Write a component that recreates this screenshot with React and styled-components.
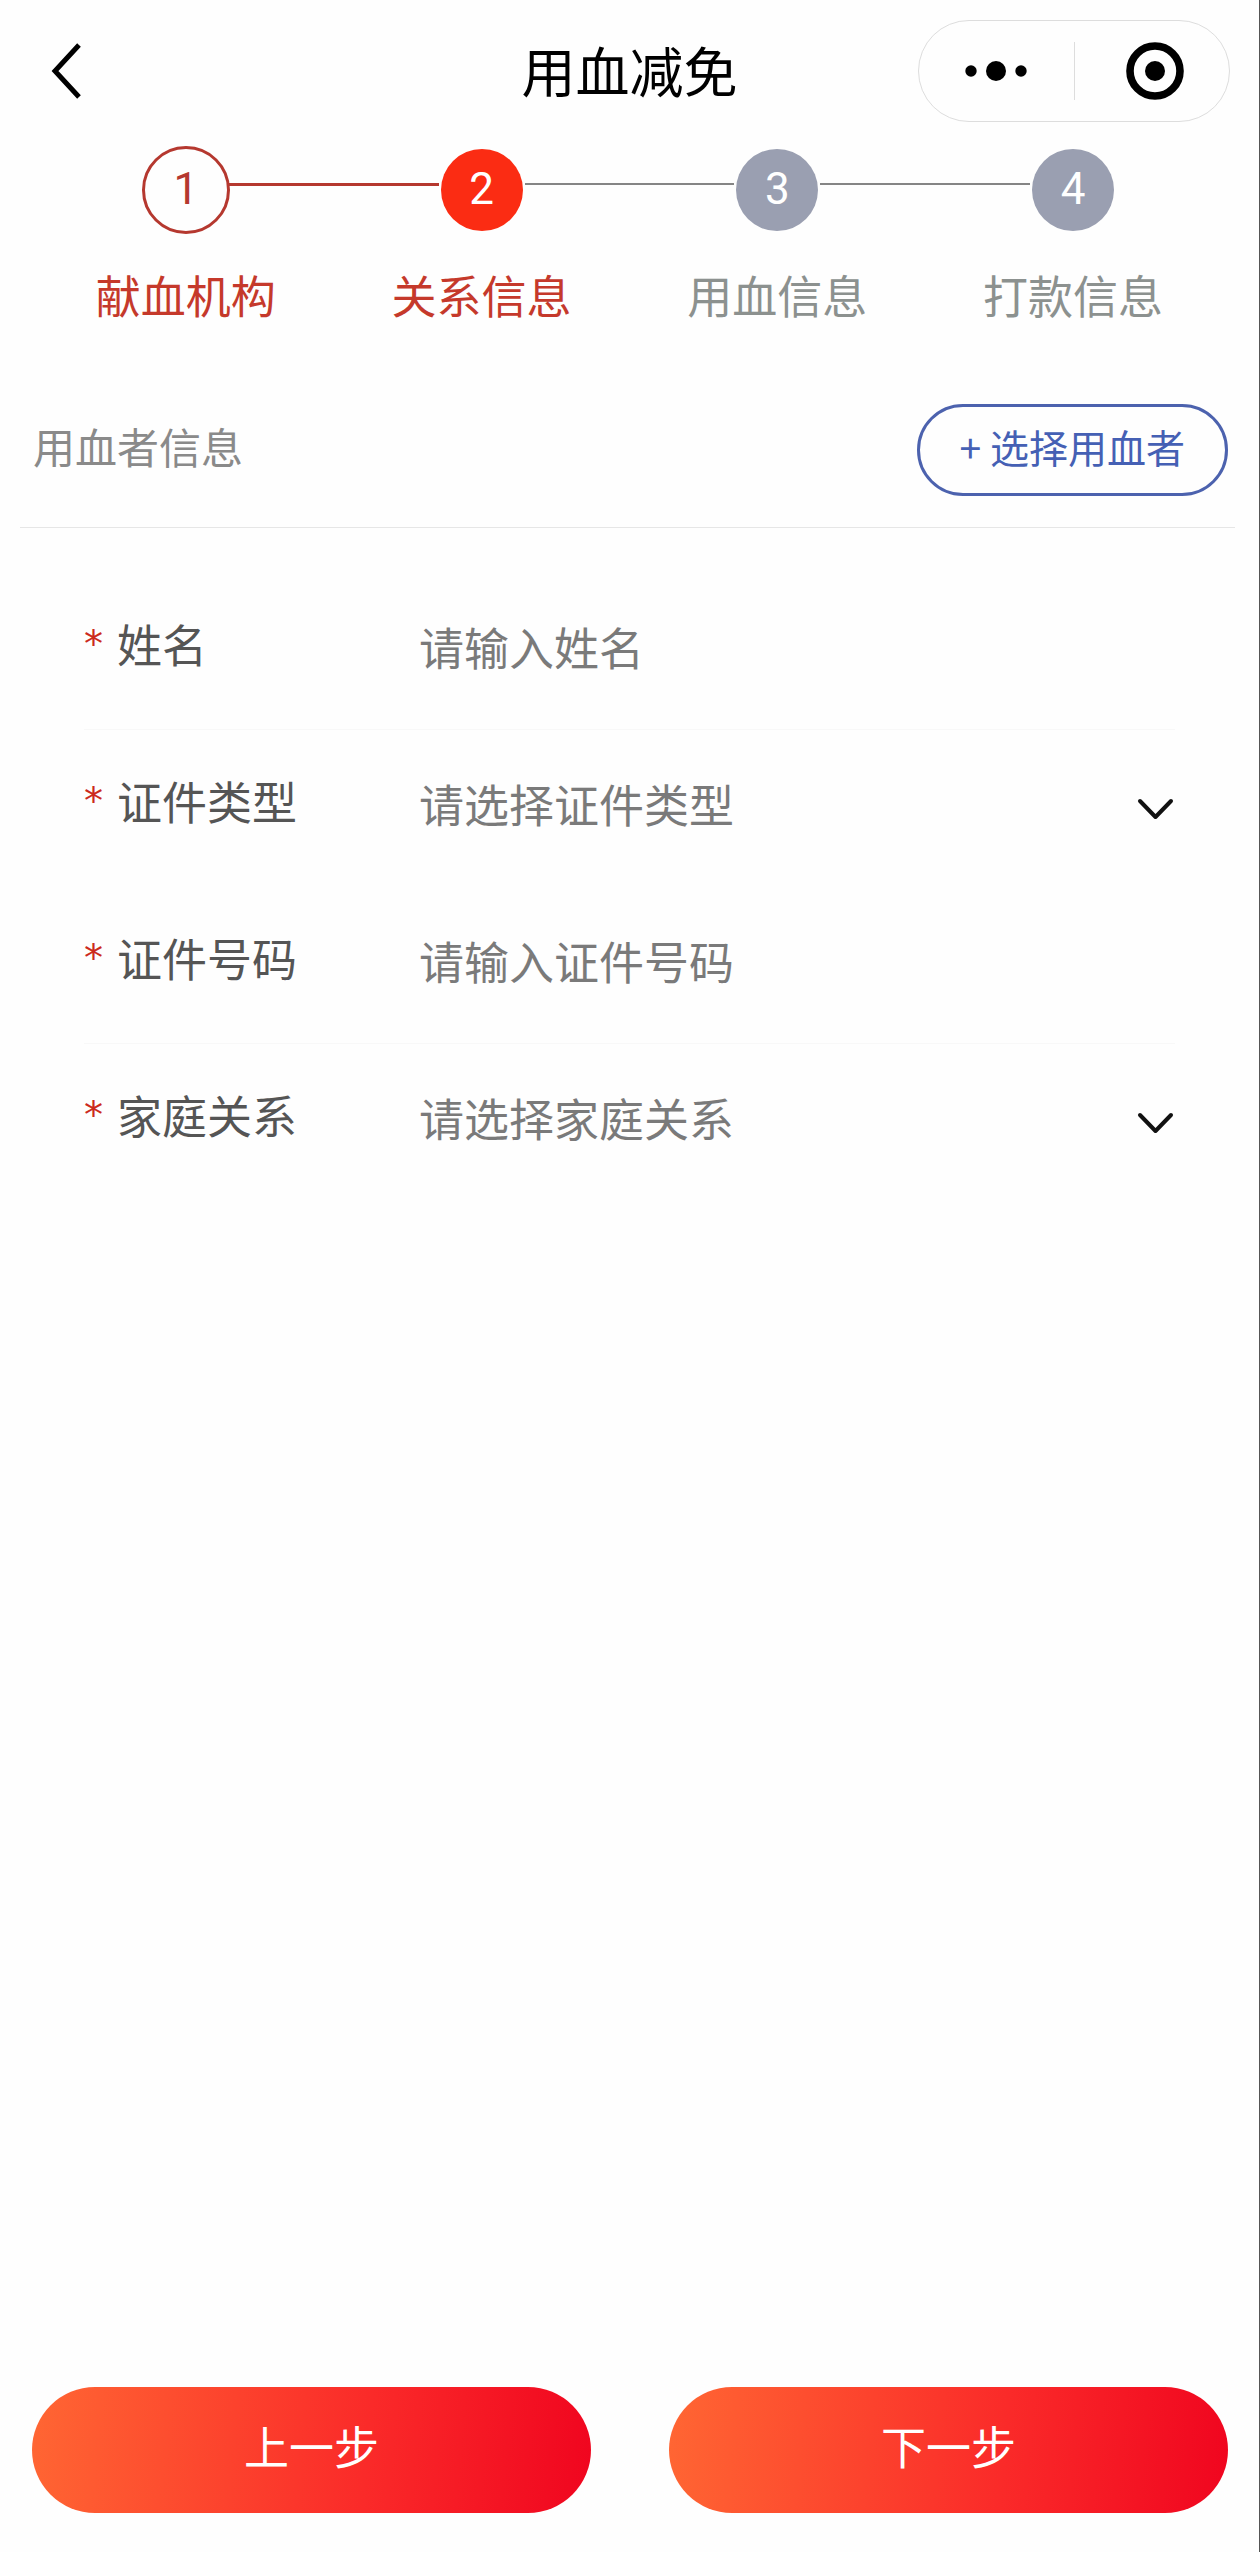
import React, { useState } from 'react'
import styled, { createGlobalStyle } from 'styled-components'

const GlobalStyle = createGlobalStyle`
  * {
    box-sizing: border-box;
  }

  body {
    margin: 0;
    background: #fefefe;
  }

  body, button, input, select {
    font-family: "Noto Sans CJK SC", sans-serif;
  }
`

const Page = styled.div`
  display: flex;
  flex-direction: column;
  min-height: 100vh;
  border-right: 1px solid #555;
`

const NavBar = styled.header`
  display: grid;
  grid-template-columns: 1fr auto 1fr;
  align-items: center;
  padding: 20px 29px 0;
`

const BackButton = styled.button`
  display: flex;
  justify-self: start;
  padding: 0 20px;
  border: 0;
  background: none;
`

const Title = styled.h1`
  margin: 0;
  padding-bottom: 2px;
  color: #000;
  font-size: 54px;
  font-weight: 400;
  line-height: 80px;
`

const Capsule = styled.div`
  display: grid;
  grid-template-columns: 1fr 1fr;
  justify-self: end;
  align-items: center;
  width: 312px;
  height: 102px;
  border: 1px solid #ddd;
  border-radius: 51px;
`

const CapsuleButton = styled.button`
  display: flex;
  justify-content: center;
  padding: 0;
  border: 0;
  background: none;

  & + & {
    padding-left: 6px;
    border-left: 1px solid #ddd;
  }
`

const Steps = styled.ol`
  display: grid;
  grid-template-columns: repeat(4, 1fr);
  margin: 0;
  padding: 24px 38px 0;
  list-style: none;
`

const Step = styled.li`
  display: flex;
  flex-direction: column;
  gap: 28px;
  color: ${props => props.$reached ? '#c5392b' : '#8c918f'};
  font-size: 45px;
  line-height: 66px;
  text-align: center;
`

const StepTrack = styled.div`
  display: flex;
  align-items: center;
  gap: 2px;
  height: 88px;
`

const StepLine = styled.span`
  flex: 1;
  height: ${props => props.$done ? 3 : 2}px;
  margin-bottom: 12px;
  background: ${props => props.$hidden ? 'transparent' : props.$done ? '#b5382f' : '#858585'};
`

const circleColors = {
  done: 'transparent',
  active: '#fb2c13',
  todo: '#9a9fb1'
}

const StepCircle = styled.span`
  width: ${props => props.$state === 'done' ? 88 : 82}px;
  height: ${props => props.$state === 'done' ? 88 : 82}px;
  margin: ${props => props.$state === 'done' ? '0 -3px' : 0};
  border: ${props => props.$state === 'done' ? '3px solid #b5382f' : 0};
  border-radius: 50%;
  background: ${props => circleColors[props.$state]};
  color: ${props => props.$state === 'done' ? '#b5382f' : '#fff'};
  font-family: Roboto, sans-serif;
  font-size: 44px;
  line-height: 80px;
`

const SectionHeader = styled.div`
  display: flex;
  align-items: center;
  justify-content: space-between;
  margin: 76px 24px 0 20px;
  padding: 0 7px 31px 13px;
  border-bottom: 1px solid #e6e6e6;
`

const SectionTitle = styled.h2`
  margin: 0;
  padding-bottom: 8px;
  color: #8a8a8a;
  font-size: 42px;
  font-weight: 400;
  line-height: 60px;
`

const PickButton = styled.button`
  height: 92px;
  padding: 0 40px 8px;
  border: 3px solid #4c62ae;
  border-radius: 46px;
  background: none;
  color: #4560b4;
  font-size: 39px;
`

const Form = styled.form`
  display: flex;
  flex: 1;
  flex-direction: column;
  padding-top: 45px;
`

const Field = styled.div`
  display: grid;
  grid-template-columns: 335px 1fr;
  align-items: center;
  height: 157px;
  margin: 0 84px;
  border-bottom: 1px solid ${props => props.$line ? '#f8f8f8' : 'transparent'};
  font-size: 45px;
`

const Label = styled.label`
  display: flex;
  gap: 14px;
  padding-bottom: 14px;
  color: #555;
  line-height: 68px;
`

const Star = styled.span`
  color: #cc2a1c;
  font-family: "DejaVu Sans", sans-serif;
  font-size: 38px;
  line-height: 68px;
`

const Input = styled.input`
  width: 100%;
  height: 80px;
  padding: 0 0 10px;
  border: 0;
  outline: 0;
  background: none;
  color: #505050;
  font-size: 45px;

  &::placeholder {
    color: #7a7a7a;
    opacity: 1;
  }
`

const SelectBox = styled.div`
  display: grid;
  align-items: center;

  & > * {
    grid-area: 1 / 1;
  }

  & > svg {
    justify-self: end;
    pointer-events: none;
  }
`

const Select = styled.select`
  width: 100%;
  height: 80px;
  padding: 0 60px 10px 0;
  border: 0;
  outline: 0;
  appearance: none;
  background: none;
  color: ${props => props.value ? '#505050' : '#7a7a7a'};
  font-size: 45px;
`

const Footer = styled.footer`
  display: grid;
  grid-template-columns: 1fr 1fr;
  gap: 78px;
  padding: 0 31px 39px 32px;
`

const FooterButton = styled.button`
  height: 126px;
  padding: 0 0 10px;
  border: 0;
  border-radius: 63px;
  background: linear-gradient(95deg, #ff6633, #fa2a29 60%, #f0051f);
  color: #fff;
  font-size: 45px;
`

const steps = [
  { title: '献血机构', state: 'done' },
  { title: '关系信息', state: 'active' },
  { title: '用血信息', state: 'todo' },
  { title: '打款信息', state: 'todo' }
]

const fields = [
  { id: 'name', label: '姓名', placeholder: '请输入姓名', line: true },
  { id: 'idType', label: '证件类型', placeholder: '请选择证件类型', options: ['居民身份证', '护照', '军官证'] },
  { id: 'idNumber', label: '证件号码', placeholder: '请输入证件号码', line: true },
  { id: 'relation', label: '家庭关系', placeholder: '请选择家庭关系', options: ['本人', '配偶', '父母', '子女'] }
]

function BackIcon () {
  return (
    <svg width='36' height='58' viewBox='0 0 36 58' fill='none' stroke='#000' strokeWidth='5'>
      <path d='M30 3 L6 29 L30 55' />
    </svg>
  )
}

function MoreIcon () {
  return (
    <svg width='64' height='22' viewBox='0 0 64 22'>
      <circle cx='6' cy='11' r='5.7' />
      <circle cx='31' cy='11' r='10' />
      <circle cx='56' cy='11' r='5.7' />
    </svg>
  )
}

function CloseIcon () {
  return (
    <svg width='58' height='58' viewBox='0 0 58 58'>
      <circle cx='29' cy='29' r='25' fill='none' stroke='#000' strokeWidth='7.6' />
      <circle cx='29' cy='29' r='10' />
    </svg>
  )
}

function ArrowIcon () {
  return (
    <svg width='40' height='24' viewBox='0 0 40 24' fill='none' stroke='#111' strokeWidth='4' strokeLinecap='round' strokeLinejoin='round'>
      <path d='M5 5 L20.500 21 L36 5' />
    </svg>
  )
}

function StepBar () {
  return (
    <Steps>
      {steps.map((step, i) => (
        <Step key={step.title} $reached={step.state !== 'todo'}>
          <StepTrack>
            <StepLine $hidden={i === 0} $done={step.state === 'active'} />
            <StepCircle $state={step.state}>{i + 1}</StepCircle>
            <StepLine $hidden={i === steps.length - 1} $done={step.state === 'done'} />
          </StepTrack>
          {step.title}
        </Step>
      ))}
    </Steps>
  )
}

function App () {
  const [values, setValues] = useState({ name: '', idType: '', idNumber: '', relation: '' })

  const change = e => setValues({ ...values, [e.target.id]: e.target.value })

  return (
    <Page>
      <GlobalStyle />
      <NavBar>
        <BackButton aria-label='返回'><BackIcon /></BackButton>
        <Title>用血减免</Title>
        <Capsule>
          <CapsuleButton aria-label='更多'><MoreIcon /></CapsuleButton>
          <CapsuleButton aria-label='关闭'><CloseIcon /></CapsuleButton>
        </Capsule>
      </NavBar>

      <StepBar />

      <SectionHeader>
        <SectionTitle>用血者信息</SectionTitle>
        <PickButton type='button'>+ 选择用血者</PickButton>
      </SectionHeader>

      <Form id='patient'>
        {fields.map(field => (
          <Field key={field.id} $line={field.line}>
            <Label htmlFor={field.id}><Star>*</Star>{field.label}</Label>
            {field.options ? (
              <SelectBox>
                <Select id={field.id} value={values[field.id]} onChange={change}>
                  <option value='' disabled>{field.placeholder}</option>
                  {field.options.map(option => <option key={option}>{option}</option>)}
                </Select>
                <ArrowIcon />
              </SelectBox>
            ) : (
              <Input id={field.id} placeholder={field.placeholder} value={values[field.id]} onChange={change} />
            )}
          </Field>
        ))}
      </Form>

      <Footer>
        <FooterButton type='button'>上一步</FooterButton>
        <FooterButton type='button'>下一步</FooterButton>
      </Footer>
    </Page>
  )
}

export default App
